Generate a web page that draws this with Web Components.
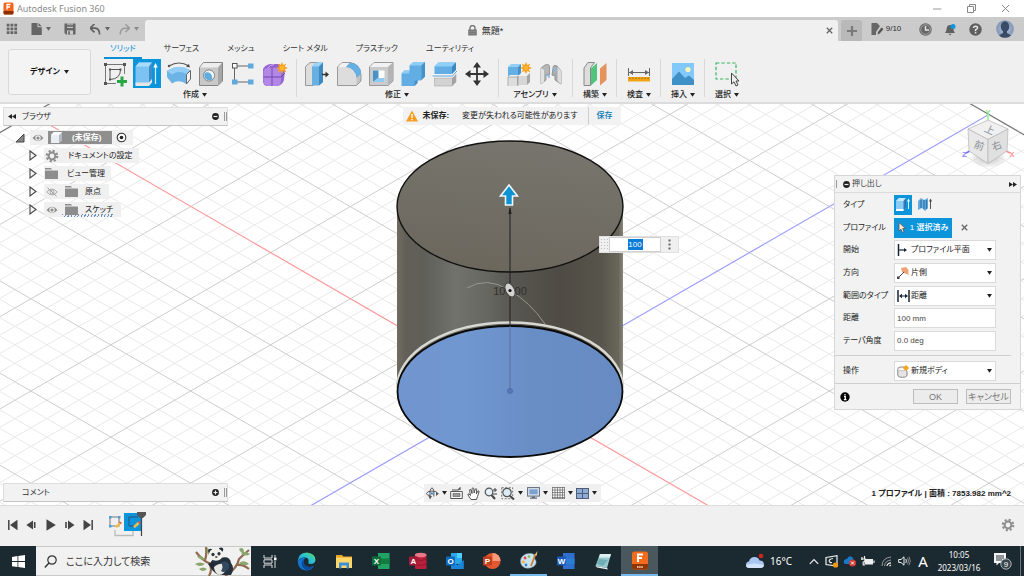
<!DOCTYPE html>
<html lang="ja">
<head>
<meta charset="utf-8">
<title>Autodesk Fusion 360</title>
<style>
  html, body { height: 100%; margin: 0; }
  body {
    background: #fff; color: #2b2b2b;
    font: 8px/12px "Liberation Sans", "Noto Sans CJK JP", sans-serif;
    font-feature-settings: "palt";
    overflow: hidden;
  }
</style>
</head>
<body>
<fusion-app></fusion-app>

<script>
/* ---------- icon library: name -> [width, height, markup] ---------- */
const BOX = (x, y, s, d, front, top, side) =>
  `<path d="M${x} ${y + d}L${x + d} ${y}H${x + s + d}L${x + s} ${y + d}Z" fill="${top}"/>
   <path d="M${x + s} ${y + d}L${x + s + d} ${y}V${y + s}L${x + s} ${y + s + d}Z" fill="${side}"/>
   <path d="M${x} ${y + d}H${x + s}V${y + s + d}H${x}Z" fill="${front}"/>`;
const GEAR = c => `<g fill="none" stroke="${c}"><circle cx="7" cy="7" r="3.4" stroke-width="2"/><circle cx="7" cy="7" r="5.2" stroke-width="2.2" stroke-dasharray="2.1 1.98"/></g>`;
const STAR = (x, y) => `<g transform="translate(${x} ${y})"><path d="M0-6L1.3-2.9L4.2-4.2L2.9-1.3L6 0L2.9 1.3L4.2 4.2L1.3 2.9L0 6L-1.3 2.9L-4.2 4.2L-2.9 1.3L-6 0L-2.9-1.3L-4.2-4.2L-1.3-2.9Z" fill="#f5a01d"/><circle r="2.3" fill="#ffb52e"/></g>`;
const EYE = c => `<path d="M.5 5Q6-1.6 11.500 5Q6 11.600 .5 5Z" fill="${c}"/><circle cx="6" cy="5" r="2.700" fill="#f0f0f0"/><circle cx="6" cy="5" r="1.600" fill="${c}"/>`;
const OFFICE = (back, mid, front, letter) =>
  `<path d="M7 1H18.500V17H7Z" fill="${back}"/><path d="M7 6.500H18.500V12H7Z" fill="${mid}"/><rect x="1" y="4.500" width="9" height="9" rx=".8" fill="${front}"/><text x="5.500" y="11.600" font-family="Liberation Sans" font-size="8" font-weight="700" text-anchor="middle" fill="#fff">${letter}</text>`;

const ICONS = {
  app: [11, 13, `<rect x=".5" y=".5" width="10" height="12" rx="1.500" fill="#f2651d"/><path d="M.5 9H10.500V11A1.500 1.500 0 0 1 9 12.500H2A1.500 1.500 0 0 1 .5 11Z" fill="#8a3206"/><path d="M4 7.500V2.500H7.500M4 5H7" stroke="#fff" stroke-width="1.300" fill="none"/>`],
  minimize: [9, 9, `<path d="M0 5H8.500" stroke="#999" fill="none"/>`],
  restore: [9, 9, `<path d="M.5 2.500H6.500V8.500H.5ZM2.500 2V.5H8.500V6.500H7" stroke="#888" fill="none"/>`],
  closewin: [9, 9, `<path d="M1 1L8 8M8 1L1 8" stroke="#888" fill="none"/>`],
  grid: [12, 12, `<path d="M.7 .7h2.800v2.800H.7zM4.500 .7h2.800v2.800H4.500zM8.300 .7h2.800v2.800H8.300zM.7 4.500h2.800v2.800H.7zM4.500 4.500h2.800v2.800H4.500zM8.300 4.500h2.800v2.800H8.300zM.7 8.300h2.800v2.800H.7zM4.500 8.300h2.800v2.800H4.500zM8.300 8.300h2.800v2.800H8.300z" fill="#666"/>`],
  file: [11, 12, `<path d="M.5 0H6.500V4.300H10.800V12H.5ZM7.500 0L10.800 3.300H7.500Z" fill="#666"/>`],
  caret: [5, 4, `<path d="M0 0H5L2.500 3.800Z" fill="#666"/>`],
  caretd: [5, 4, `<path d="M0 0H5L2.500 3.800Z" fill="#222"/>`],
  caretl: [5, 4, `<path d="M0 0H5L2.500 3.800Z" fill="#8a8a8a"/>`],
  save: [12, 12, `<path d="M.5 .5H11.500V11.500H2L.5 10Z" fill="#666"/><path d="M3 .5H9V5H3ZM3 7.500H9V11.500H3Z" fill="#cbcbcb"/><path d="M3 1.500H9V4H3ZM4 8.300H6V11.500H4Z" fill="#777"/>`],
  undo: [11, 11, `<path d="M4.500 0L0 4.200L4.500 8.400M.8 4.200H5Q9.600 4.600 9.600 10.500" fill="none" stroke="#606060" stroke-width="1.700"/>`],
  redo: [11, 11, `<path d="M6.500 .3L10.600 4.200L6.500 8.100M10 4.200H6Q1.200 4.600 1.200 10.500" fill="none" stroke="#999" stroke-width="1.400"/>`],
  lock: [9, 11, `<path d="M2 5V3A2.500 2.500 0 0 1 7 3V5" fill="none" stroke="#777" stroke-width="1.400"/><rect x=".2" y="4.500" width="8.600" height="6" fill="#777"/><path d="M.5 6.500H8.500M.5 8.500H8.500" stroke="#999" stroke-width=".5"/>`],
  x: [7, 7, `<path d="M.8 .8L6.200 6.200M6.200 .8L.8 6.200" stroke="#666" stroke-width="1.300"/>`],
  plus: [10, 10, `<path d="M5 0V10M0 5H10" stroke="#7a7a7a" stroke-width="2.200"/>`],
  jobs: [13, 12, `<path d="M.5 0H6L9 3L5 9V12H.5Z" fill="#666"/><path d="M6.500 11.500L7 9L10.500 4.500L12.500 6L8.800 10.500Z" fill="#555"/><path d="M7.500 .5L10 3" stroke="#cbcbcb"/>`],
  clock: [13, 13, `<circle cx="6.500" cy="6.500" r="6.200" fill="#666"/><circle cx="6.500" cy="6.500" r="4.800" fill="none" stroke="#bbb" stroke-width=".7"/><path d="M6.500 3V7H10" fill="none" stroke="#e4e4e4" stroke-width="1.500"/>`],
  bell: [13, 13, `<path d="M1 10Q2.600 8.500 2.600 5.500Q3 2 6 2Q9.200 2 9.400 5.500Q9.400 8.500 11 10Z" fill="#606060"/><path d="M4.500 10.800H7.500L6 12.500Z" fill="#606060"/><circle cx="9" cy="3.500" r="2.500" fill="#0b96dd"/>`],
  help: [13, 13, `<circle cx="6.500" cy="6.500" r="6.200" fill="#5f5f5f"/><path d="M4.500 5Q4.500 3.300 6.500 3.300Q8.600 3.300 8.600 5Q8.500 6 6.600 6.800V8.200M6.600 9V10.500" fill="none" stroke="#e4e4e4" stroke-width="1.500"/>`],
  avatar: [18, 18, `<defs><radialGradient id="a"><stop offset="0" stop-color="#b9c8de"/><stop offset="1" stop-color="#7f95b5"/></radialGradient><clipPath id="b"><circle cx="9" cy="9" r="8.800"/></clipPath></defs><circle cx="9" cy="9" r="8.800" fill="url(#a)"/><g clip-path="url(#b)" fill="#3a4b66"><ellipse cx="9" cy="6.500" rx="4.200" ry="5.300"/><path d="M7 10H11V13Q15 14.500 16 18H2Q3 14.500 7 13Z"/></g>`],

  sketch: [26, 26, `<path d="M3.500 3.500H22.500V13M3.500 3.500V22.500H14" fill="none" stroke="#777"/><path d="M8 8.500H18.500Q18.500 18 8 18.500Z" fill="none" stroke="#555"/><g fill="#555"><path d="M2 2h3v3H2zM21 2h3v3h-3zM2 21h3v3H2zM7 7.500h2v2H7zM17.500 7.500h2v2h-2zM7 17.500h2v2H7z"/></g><path d="M20 15.500V25.500M15 20.500H25" stroke="#27a845" stroke-width="3"/>`],
  extrude: [26, 26, `<path d="M1.500 5.500L5 1.500H18V18L15 21.500V24H1.500Z" fill="#7cc2f3"/><path d="M5 1.500H18L15 5.500H1.500Z" fill="#a9dbff"/><path d="M15 5.500L18 1.500V18L15 21.500Z" fill="#3f8cc8"/><path d="M1.500 21.500H15V25H1.500ZM15 21.500L18 18V21.500L15 25Z" fill="#e6e6e6"/><path d="M21.500 23V6" stroke="#d9efff" stroke-width="1.200"/><path d="M19.300 6.500H23.700L21.500 2Z" fill="#fff"/>`],
  revolve: [26, 26, `<path d="M3 5Q13-1 23 5" fill="none" stroke="#555" stroke-width="1.200"/><circle cx="3" cy="5" r="1.200" fill="#555"/><path d="M23.800 6.500L20 5.500L23 3Z" fill="#444"/><path d="M1 10Q13 2 25 10V16L20.500 23Q13 18 6 22.500L1 16Z" fill="#6cb3e6"/><path d="M1 10Q13 2 24 9L20.500 13Q13 9 6 13.500Z" fill="#94cdf5"/><path d="M20.500 13.500L24.500 9.500V18L20.500 23Z" fill="#f5f5f5" stroke="#666"/>`],
  hole: [26, 26, `<path d="M1.500 6.500L5.500 1.500H24.500V20L20 24.500H1.500Z" fill="#c9c9c9" stroke="#858585"/><path d="M5.500 2H24L20 6.500H2Z" fill="#eee"/><path d="M20 6.500L24 2V20L20 24Z" fill="#a6a6a6"/><circle cx="11" cy="14.500" r="5.600" fill="#f4f4f4" stroke="#858585"/><path d="M7.500 11.500Q14 10 14.500 18.500Q10 20.500 6.800 17Q5.500 13.500 7.500 11.500Z" fill="#60abe0"/>`],
  pattern: [26, 26, `<path d="M4.500 5H21M4.500 5V21H21" fill="none" stroke="#666"/><rect x="2.500" y="2.500" width="4.500" height="4.500" fill="#fff" stroke="#555"/><path d="M18 2.500h5.500v5H18zM2 18.500h5.500v5H2zM18 18.500h5.500v5H18z" fill="#5ea9dd"/>`],
  form: [28, 26, `<path d="M2 8Q4 4 9 3H18Q22 5 24 8L23 19Q21 25 15 25H7Q2 25 2 20Z" fill="#9466d2"/><path d="M2.500 10Q3 7 7 7H16Q20 7 20 11V20Q20 25 15 25H7Q2.500 24 2.500 20Z" fill="#b288e6"/><path d="M11 7V25M2.500 16H20L24 12" fill="none" stroke="#7546b4"/><path d="M7 7Q9 3.500 13 3.500" fill="none" stroke="#cfaef5"/>${STAR(21, 7)}`],
  presspull: [26, 26, `<path d="M1.500 5.500L6 1.500H14V21L9 24.500H1.500Z" fill="#ddd" stroke="#999"/><path d="M8 5.500L12 1.500H19V21L15 24.500H8Z" fill="#69afe2"/><path d="M12 1.500H19L15 5.500H8Z" fill="#9bd2f8"/><path d="M15 5.500L19 1.500V21L15 24.500Z" fill="#3f8ac2"/><path d="M18 13.500H22" stroke="#333" stroke-width="1.500"/><path d="M21.500 10.500L25 13.500L21.500 16.500Z" fill="#333"/>`],
  fillet: [26, 26, `<path d="M1.500 6L6 1.500H14Q24.500 3 25 14V20L20.500 24.500H1.500Z" fill="#c4c4c4" stroke="#999"/><path d="M6 2H14L10 6H2Z" fill="#f1f1f1"/><path d="M2 6H10Q19.500 7 20.500 17V24H2Z" fill="#ddd"/><path d="M14 1.500Q25 3 25 13L20.500 17Q19.500 7 10 6Z" fill="#65afe4"/>`],
  shell: [26, 26, `<path d="M1.500 6L6 1.500H25V20L20 24.500H1.500Z" fill="#cbcbcb" stroke="#999"/><path d="M6 2H24.500L20 6H2Z" fill="#f2f2f2"/><path d="M20 6L24.500 2V20L20 24Z" fill="#b4b4b4"/><path d="M5 9.500H16.500V21H5Z" fill="#fff"/><path d="M5 9.500H10.500V17L5 21Z" fill="#4b92c7"/><path d="M5 21L9.500 17H16.500V21Z" fill="#91cbf3"/>`],
  combine: [26, 26, `<path d="M1.500 12.500L4.500 9.500H9.500V4.500L13.500 1H25V15.500L21 19.500H17.500V22L14.500 25H1.500Z" fill="#62aee4"/><path d="M13.500 1H25L21.500 4.500H9.500Z" fill="#8fcdf6"/><path d="M21.500 4.500L25 1V15.500L21.500 19Z" fill="#4691ca"/><path d="M1.500 12.500L4.500 9.500H9.500L9 12.500Z" fill="#8fcdf6"/><path d="M14.500 20L17.500 19V22L14.500 25Z" fill="#4691ca"/>`],
  split: [26, 26, `<path d="M2.500 5.500L6.500 1.500H24V9L20 13H2.500Z" fill="#62aee4"/><path d="M6.500 1.500H24L20 5.500H2.500Z" fill="#90cff8"/><path d="M20 5.500L24 1.500V9L20 13Z" fill="#3d88c0"/><path d="M2.500 17H20L24 13V21L20 25H2.500Z" fill="#d2d2d2" stroke="#aaa" stroke-width=".6"/><path d="M20 17L24 13V21L20 25Z" fill="#a4a4a4"/><path d="M.5 15H20.500L25 10" fill="none" stroke="#fff" stroke-width="2.600"/><path d="M.5 15H20.500L25 10" fill="none" stroke="#4f9bd2"/>`],
  move: [26, 26, `<path d="M13 5V21M5 13H21" stroke="#333" stroke-width="1.800"/><path d="M13 1L17 6.500H9ZM13 25L9 19.500H17ZM1 13L6.500 9V17ZM25 13L19.500 17V9Z" fill="#333"/>`],
  newcomp: [26, 26, `${BOX(2, 3, 10, 3, "#64afe4", "#93cff6", "#4791ca")}${BOX(2, 14, 9, 2, "#ddd", "#eee", "#aaa")}${BOX(12, 12, 9, 3, "#d6d6d6", "#f0f0f0", "#a4a4a4")}<path d="M2 25V16H11.500M12 25V15" fill="none" stroke="#999" stroke-width=".7"/>${STAR(20, 7)}`],
  joint: [26, 26, `<path d="M3 7L7 4Q12 2 11.500 7V14L8 13V19L3 23Z" fill="#b7b7b7" stroke="#888" stroke-width=".8"/><path d="M3 7L6 9V21L3 23Z" fill="#e2e2e2"/><path d="M15 7Q15 3 19 5L23 10V23L17 19V15L14 14Z" fill="#aaa" stroke="#888" stroke-width=".8"/><path d="M19.500 6L23 10V23L19.500 20Z" fill="#ddd"/><path d="M8 14L11 15V17M15 7L17 8V12" fill="none" stroke="#82bee8" stroke-width="1.500"/>`],
  construct: [26, 26, `<path d="M2 7L6 1.500H12.500L8.500 7V24.500H2Z" fill="#ddd" stroke="#888"/><path d="M9 7.500L15 2V19L9 24.500Z" fill="#53c47c"/><path d="M18 7.500L24.500 2V19L18 24.500Z" fill="#e5925c"/>`],
  inspect: [26, 26, `<path d="M2.500 7V15M23.500 7V15" stroke="#666"/><path d="M3 11.500H23" stroke="#666"/><path d="M3 11.500L7 9V14ZM23 11.500L19 9V14Z" fill="#666"/><rect x="2" y="16" width="22" height="4.500" fill="#f3a416"/><path d="M4 16.500V18M7 16.500V18M10 16.500V18M13 16.500V18M16 16.500V18M19 16.500V18M22 16.500V18" stroke="#8a5a00" stroke-width=".8"/>`],
  insert: [26, 26, `<rect x="2" y="2" width="22" height="22" fill="#82c8fb"/><circle cx="18" cy="8.500" r="2.600" fill="#fff3b8"/><path d="M2 18L9 10.500L15 17L19 14.500L24 19V24H2Z" fill="#3e90c6"/>`],
  select: [28, 28, `<rect x="3" y="3" width="20" height="16" fill="none" stroke="#3cb563" stroke-width="1.200" stroke-dasharray="3.400 2"/><path d="M18.500 13V24L21 21.800L23 26L25 25L23 21H26Z" fill="#eee" stroke="#444"/>`],

  rewind2: [8, 5, `<path d="M4 0V5L0 2.500ZM8 0V5L4 2.500Z" fill="#222"/>`],
  forward2: [8, 5, `<path d="M0 0V5L4 2.500ZM4 0V5L8 2.500Z" fill="#222"/>`],
  minusdot: [7, 7, `<circle cx="3.500" cy="3.500" r="3.400" fill="#222"/><path d="M1.500 3.500H5.500" stroke="#eee" stroke-width="1.200"/>`],
  plusdot: [7, 7, `<circle cx="3.500" cy="3.500" r="3.400" fill="#222"/><path d="M1.500 3.500H5.500M3.500 1.500V5.500" stroke="#eee" stroke-width="1.200"/>`],
  info: [10, 10, `<circle cx="5" cy="5" r="4.700" fill="#000"/><path d="M5 2V3.500M4 4.700H5.300V7.500M3.800 7.700H6.500" stroke="#fff" stroke-width="1.300" fill="none"/>`],
  warn: [12, 12, `<path d="M6 .5L12 11.500H0Z" fill="#f79c1e"/><path d="M6 4V8M6 9V10.300" stroke="#fff" stroke-width="1.400"/>`],
  open: [10, 10, `<path d="M9 1V9H1Z" fill="#888" stroke="#444"/>`],
  closed: [8, 11, `<path d="M1 1L7 5.500L1 10Z" fill="#f5f5f5" stroke="#444" stroke-width="1.100"/>`],
  eye: [12, 10, EYE("#8d8d8d")],
  eyeoff: [12, 10, `<path d="M.8 5Q6-.8 11.200 5Q6 10.800 .8 5Z" fill="none" stroke="#aaa"/><circle cx="6" cy="5" r="2" fill="none" stroke="#aaa"/><path d="M1.500 .8L10.500 9.200" stroke="#999"/>`],
  gear: [14, 14, GEAR("#8d8d8d")],
  folder: [13, 11, `<path d="M0 0H6L7 1.500H0ZM0 2.500H13V11H0Z" fill="#8d8d8d"/>`],
  body: [13, 13, `<path d="M1 4L4 1H12V9L9 12H1Z" fill="#e9eef3"/><path d="M9 4L12 1V9L9 12Z" fill="#b4b9bf"/><path d="M4 1H12L9 4H1Z" fill="#fff"/>`],
  radio: [11, 11, `<circle cx="5.500" cy="5.500" r="4.300" fill="#fff" stroke="#333" stroke-width="1.100"/><circle cx="5.500" cy="5.500" r="1.800" fill="#222"/>`],

  typesolid: [14, 14, `<path d="M0 3L3 0H10V10L7.500 13H0Z" fill="#8accf7"/><path d="M3 0H10L7.500 3H0Z" fill="#c3e7ff"/><path d="M7.500 3L10 0V10L7.500 13Z" fill="#3277b0"/><path d="M0 11H7.500V13H0Z" fill="#fff"/><path d="M12.500 11V3" stroke="#d8efff"/><path d="M11 3.500H14L12.500 .5Z" fill="#fff"/>`],
  typethin: [14, 14, `<path d="M0 3L3 0L6 2L10 0V10L7 13L4 10L0 12Z" fill="#64abe0"/><path d="M3 2V10M6 2V11M8.500 2V11" stroke="#3478ae" stroke-width="1.300"/><path d="M12.500 11V3" stroke="#555"/><path d="M11 3.500H14L12.500 .5Z" fill="#444"/>`],
  cursor: [8, 11, `<path d="M1 .5V9L3 7.200L4.500 10.500L6 9.800L4.700 6.500H7.500Z" fill="#ffe8cf" stroke="#4f5963" stroke-width=".8"/>`],
  planar: [12, 12, `<path d="M1.500 0V12" stroke="#17253d" stroke-width="1.500"/><path d="M2 6H8.500" stroke="#17253d" stroke-width="1.200"/><path d="M7 4L10 6L7 8Z" fill="#17253d"/>`],
  oneside: [12, 12, `<path d="M4 1L9 0L11.500 3V8L5 5Z" fill="#f0a276"/><path d="M1 11L7 5" stroke="#444"/><path d="M0 9.500H2.500V12H0Z" fill="#444"/>`],
  dist: [13, 12, `<path d="M1 0V12M12 0V12" stroke="#17253d" stroke-width="1.500"/><path d="M3 6H10" stroke="#17253d"/><path d="M2 6L5 3.800V8.200ZM11 6L8 3.800V8.200Z" fill="#17253d"/>`],
  newbody: [12, 13, `<path d="M.8 4Q.8 2 4 2H7L9 5L10 6V10Q10 12.300 5.500 12.300Q.8 12.300 .8 10Z" fill="#e5e5e5" stroke="#888"/><ellipse cx="5" cy="4.200" rx="4" ry="1.700" fill="#fafafa" stroke="#aaa" stroke-width=".6"/><circle cx="9" cy="3" r="2.300" fill="#f6a51e"/><path d="M9 0V6M6 3H12" stroke="#f6a51e"/>`],

  orbit: [13, 13, `<path d="M4 8.800Q.5 8 .5 6.500Q.8 4.300 6 4Q11 4.200 11.500 6.200" fill="none" stroke="#555"/><path d="M4.200 9.500Q3.300 2 6 .8Q8.500 2 7.800 9.500" fill="none" stroke="#555"/><path d="M2.500 9H6L4 12.500ZM10 5L13 6.500L10 9Z" fill="#555"/><path d="M4.800 6.500H7.200M6 5.300V7.700" stroke="#2488d8" stroke-width="1.200"/>`],
  lookat: [13, 12, `<path d="M.7 4.500H12.300V11.500H.7Z" fill="#fafafa" stroke="#555"/><path d="M3 6.500H10V9.500H3Z" fill="#999" stroke="#555" stroke-width=".6"/><path d="M2 3H8L10 1V3" fill="none" stroke="#555" stroke-width="1.200"/>`],
  hand: [13, 13, `<path d="M4 12.500L1 8Q.5 6.500 2 7L3.500 8.500L2.500 3Q3 1.500 4 3L5 6.500L5 1.500Q6 .2 6.800 1.500L7 6L8.300 2Q9.500 1 9.700 2.500L9.300 7L11 4Q12.500 3.500 12 5L10.500 9.500L9.500 12.500Z" fill="#fff" stroke="#444" stroke-width=".9"/>`],
  zoom: [13, 13, `<circle cx="5" cy="5" r="3.800" fill="#e3f1fa" stroke="#555" stroke-width="1.200"/><path d="M7.500 8L11 12" stroke="#444" stroke-width="2"/><path d="M9 3H13M11 1V5M9 7H13" stroke="#444"/>`],
  zoomwin: [14, 13, `<rect x=".7" y=".7" width="11" height="11" fill="none" stroke="#777" stroke-dasharray="2 1.500"/><circle cx="6" cy="5.500" r="4.200" fill="#dcecf7" stroke="#555" stroke-width="1.200"/><path d="M9 9L13 12.500" stroke="#444" stroke-width="2"/>`],
  display: [13, 12, `<rect x=".6" y=".6" width="11.800" height="8.500" fill="#dfe7f0" stroke="#606a78"/><rect x="2.300" y="2.300" width="8.400" height="5" fill="#7ba1d2"/><path d="M5 9.500H8V10.500H10V11.800H3V10.500H5Z" fill="#606a78"/>`],
  gridnav: [13, 12, `<rect x=".5" y=".5" width="12" height="11" fill="#f8f8f8"/><path d="M.5 0V12M3 0V12M5.500 0V12M8 0V12M10.500 0V12M12.500 0V12M0 .5H13M0 3H13M0 5.500H13M0 8H13M0 10.500H13M0 11.700H13" stroke="#666" stroke-width=".7"/>`],
  viewports: [13, 11, `<rect x=".5" y=".5" width="12" height="10" fill="#8eabd6" stroke="#4e5d78"/><path d="M6.500 .5V10.500M.5 5.500H12.500" stroke="#4e5d78"/>`],

  tostart: [11, 12, `<path d="M1.800 1V11" stroke="#444" stroke-width="1.500"/><path d="M10.500 .8V11.200L3 6Z" fill="#444"/>`],
  stepback: [11, 10, `<path d="M7 .5V9.500L.3 5Z" fill="#444"/><path d="M8.700 2V8" stroke="#444" stroke-width="1.600"/>`],
  play: [10, 12, `<path d="M.5 .3V11.700L9.800 6Z" fill="#444"/>`],
  stepfwd: [11, 10, `<path d="M4 .5V9.500L10.500 5Z" fill="#444"/><path d="M2 2V8" stroke="#444" stroke-width="1.600"/>`],
  toend: [11, 12, `<path d="M9.200 1V11" stroke="#444" stroke-width="1.500"/><path d="M.5 .8V11.200L8 6Z" fill="#444"/>`],
  history: [40, 26, `<path d="M7 18V23.500H25V18" fill="none" stroke="#bbb" stroke-width="1.300"/><rect x="2" y="5" width="9" height="9" fill="none" stroke="#777"/><path d="M1 4h2.500v2.500H1zM10 4h2.500v2.500H10zM1 13h2.500v2.500H1z" fill="#49a2dd"/><path d="M7 14.500L11 10.500L13 12L9 16Z" fill="#f2bd4c"/><path d="M11 10.500L12 9.500L14 11L13 12Z" fill="#e04c3c"/><rect x="16" y="1" width="17" height="18" fill="#0a94dc"/><path d="M21 5H30M21 5V14H26" fill="none" stroke="#2b5575"/><path d="M25 14.500L29.500 10L31.500 12L27 16Z" fill="#f2bd4c"/><path d="M29.500 10L30.500 9L32.500 10.500L31.500 12Z" fill="#e8564a"/><path d="M33.500 5V24" stroke="#444" stroke-width="1.200"/><path d="M29 0H38V3L35 6H32L29 3Z" fill="#555"/>`],

  windows: [13, 13, `<path d="M0 2L5.500 1V6H0ZM6.300 .9L13 0V6H6.300ZM0 7H5.500V12L0 11.200ZM6.300 7H13V13L6.300 12.100Z" fill="#fff"/>`],
  search: [13, 13, `<circle cx="8" cy="5" r="4.200" fill="none" stroke="#333" stroke-width="1.200"/><path d="M5 8L.8 12.500" stroke="#333" stroke-width="1.400"/>`],
  panda: [56, 29, `<path d="M1 5Q8 14 14 16Q22 22 33 26M30 29Q42 22 44 12Q48 8 54 3M11 0Q12 8 10 13M14 16Q18 22 14 29M42 18Q48 17 54 22" fill="none" stroke="#916a50" stroke-width="2.200"/>
    <g fill="#8ba66d"><path d="M2 9Q7 8 10 13Q4 13 2 9ZM0 17Q5 14 10 17Q5 21 0 17ZM46 7Q50 3 55 7Q51 10 46 7ZM44 2Q49-1 49 6Q46 7 44 2ZM44 16Q49 12 54 17Q49 20 44 16ZM4 22Q8 19 12 22Q8 26 4 22ZM12 1Q16 2 14 8Q11 5 12 1Z"/></g>
    <path d="M15 17Q17 10 25 11Q35 8 36 16Q40 21 36 28H24Q15 24 15 17Z" fill="#23303e"/><path d="M19 20Q28 13 31 21Q30 28 24 28Q19 25 19 20Z" fill="#e9e7e2"/>
    <path d="M26 15Q35 13 34 21Q30 27 26 24Q29 20 26 15Z" fill="#34485f"/>
    <circle cx="15.500" cy="4" r="2.300" fill="#222c38"/><circle cx="26" cy="2.800" r="2.300" fill="#222c38"/><ellipse cx="21" cy="7.500" rx="7" ry="6.200" fill="#f3f1ec"/><ellipse cx="18" cy="7.500" rx="1.600" ry="1.800" fill="#2b343f"/><ellipse cx="24" cy="6.800" rx="1.600" ry="1.800" fill="#2b343f"/><ellipse cx="21.300" cy="10" rx="1.300" ry=".8" fill="#222"/>
    <path d="M13 17Q18 14 20 18L17 22Z" fill="#1f2a36"/>`],
  taskview: [14, 13, `<path d="M1 0V3H9V0M1 13V10H9V13M1 4.800H9V8.200H1Z" fill="none" stroke="#ddd"/><path d="M12 0V2M12 6V13" stroke="#ddd"/><rect x="11" y="2.500" width="2.500" height="2.800" fill="#fff"/>`],
  edge: [19, 19, `<defs><linearGradient id="a" x1="0" y1="1" x2="1" y2="0"><stop offset="0" stop-color="#1a8fe0"/><stop offset=".55" stop-color="#2bc3d2"/><stop offset="1" stop-color="#62d95a"/></linearGradient></defs><path d="M.7 9Q1.500 .8 9.500 .5Q18.300 1 18.500 8Q18 12 13.500 12Q10.500 11.800 11.500 10Q12.200 6.500 8.500 5.600Q3.500 5 .7 9Z" fill="url(#a)"/><path d="M.7 9Q4 4.600 8.500 6Q5.500 8.500 7 12Q9.500 16.500 17 14Q14 18.800 9 18.500Q1 17.500 .7 9Z" fill="#1277d2"/><path d="M8.500 6Q5.500 8.500 7 12Q9.500 16.500 17 14Q14 18.300 10 18.400Q4 16 4.500 11Q5.200 7.500 8.500 6Z" fill="#0d4c9d"/>`],
  explorer: [18, 15, `<path d="M1 1H7L8.500 2.500H17V14H1Z" fill="#e9a528"/><path d="M1 3.500H17V14H1Z" fill="#ffd768"/><path d="M4 14.500V8.500H14V14.500H11.500V11.500H6.500V14.500Z" fill="#3a8edb"/>`],
  excel: [19, 18, OFFICE("#21a366", "#107c41", "#0f6f3b", "X")],
  access: [19, 18, `<rect x="7" y="2" width="11.500" height="15" rx="1" fill="#b81f3a"/><ellipse cx="12.700" cy="3" rx="5.800" ry="2.300" fill="#e8798d"/><path d="M7 7Q13 10 18.500 7M7 12Q13 15 18.500 12" stroke="#8e1830" fill="none"/><rect x="1" y="4.500" width="9" height="9" rx=".8" fill="#a51b35"/><text x="5.500" y="11.600" font-family="Liberation Sans" font-size="8" font-weight="700" text-anchor="middle" fill="#fff">A</text>`],
  outlook: [19, 18, `<path d="M6 1H17V12H6Z" fill="#28a8ea"/><path d="M12 1H17V6H12Z" fill="#50d0ff"/><path d="M6 9L12.500 13L18.800 8V17H6Z" fill="#1b85d8"/><rect x="1" y="4.500" width="9" height="9" rx=".8" fill="#0f6cbd"/><text x="5.500" y="11.600" font-family="Liberation Sans" font-size="8" font-weight="700" text-anchor="middle" fill="#fff">O</text>`],
  ppt: [19, 18, `<circle cx="10.500" cy="9" r="8" fill="#e2572f"/><path d="M10.500 1A8 8 0 0 1 18.500 9H10.500Z" fill="#ff9a78"/><rect x="1" y="4.500" width="9" height="9" rx=".8" fill="#c13f1d"/><text x="5.500" y="11.600" font-family="Liberation Sans" font-size="8" font-weight="700" text-anchor="middle" fill="#fff">P</text>`],
  paint: [19, 19, `<path d="M2 13Q0 6 7 3Q16 1 15.500 6Q15 8 17 10Q18 15 11 17Q4 18 2 13Z" fill="#c9e3f0" stroke="#8ba7b8" stroke-width=".6"/><circle cx="6" cy="7" r="1.400" fill="#e2453a"/><circle cx="10" cy="5.500" r="1.300" fill="#7fc043"/><circle cx="4.500" cy="11" r="1.400" fill="#f2b234"/><circle cx="7" cy="14" r="1.400" fill="#3f7fd1"/><path d="M12 15L16.500 3" stroke="#c8833c" stroke-width="1.800"/><path d="M15.500 4L18.500 0L17.700 4.700Z" fill="#f0c26b"/>`],
  word: [19, 18, OFFICE("#2f6fd0", "#2b7cd3", "#1b5abe", "W")],
  notepad: [18, 17, `<path d="M6 1H17L13 15L1.500 13Z" fill="#97cbd0"/><path d="M6 1H17L16 4.500H4.800Z" fill="#dceeed"/><path d="M1.500 13L13 15L14 16.500L3 14.500Z" fill="#f5f5f5"/><path d="M5 6L14 7L9 13L3 11Z" fill="#6eaeb4"/>`],
  fusion: [18, 19, `<rect x="1" y=".5" width="16" height="18" rx="2.500" fill="#f46b1b"/><path d="M1 13H17V16A2.500 2.500 0 0 1 14.500 18.500H3.500A2.500 2.500 0 0 1 1 16Z" fill="#8f3504"/><path d="M7 11V3.500H12M7 7H11" stroke="#fff" stroke-width="2" fill="none"/><path d="M6 16H12" stroke="#ffd9bf" stroke-width="1.500" stroke-dasharray="1.600 .5"/>`],
  weather: [20, 16, `<path d="M4.500 15Q1 15 1 12Q1 9 4 8.600Q5 4 9.500 4Q13.500 4 14.500 7.500Q19 7.500 19 11.500Q19 15 15 15Z" fill="#a8c6f1"/><path d="M4.500 15Q1 15 1 12Q8 9 19 12Q18.500 15 15 15Z" fill="#d3e3fb"/><circle cx="16" cy="3" r="2.300" fill="#d0251f"/>`],
  up: [10, 7, `<path d="M.8 5.800L5 1.500L9.200 5.800" fill="none" stroke="#eee" stroke-width="1.200"/>`],
  screen: [14, 13, `<path d="M1 2.500L12 .7V11L1 9.500Z" fill="none" stroke="#eee" stroke-width="1.200"/><path d="M8 3.500Q4 4 4.200 6Q4.500 8 7 7.500" fill="none" stroke="#eee" stroke-width="1.200"/><circle cx="10.500" cy="10" r="2.600" fill="#f59b0c"/>`],
  onedrive: [14, 12, `<path d="M1 8Q0 4 4 4Q5 .8 8 1.500Q10 2 10.500 4.500L7 9H3Q1.500 9 1 8Z" fill="#1879ca"/><circle cx="9.500" cy="8" r="3.500" fill="#d23a30"/><path d="M8 6.500L11 9.500M11 6.500L8 9.500" stroke="#fff"/>`],
  battery: [14, 10, `<rect x="3.500" y="3" width="8.500" height="5.500" fill="#eee"/><path d="M13 4.500V7M1 1V4M3.500 0V3M0 3H4.500Q4.500 6 2.200 6V9H4" fill="none" stroke="#eee" stroke-width="1.200"/>`],
  wifi: [11, 11, `<g fill="none" stroke="#999"><path d="M1 10Q1 2 10 1"/><path d="M3.500 10Q4 4.500 10 4"/></g><path d="M6 10Q6.500 7 10 6.800M8.500 10L10 9" fill="none" stroke="#eee" stroke-width="1.200"/>`],
  volume: [13, 10, `<path d="M.7 3.500H3L6 .8V9.200L3 6.500H.7Z" fill="none" stroke="#eee"/><path d="M7.800 3Q9 5 7.800 7" fill="none" stroke="#eee"/><path d="M9.500 1.700Q11.500 5 9.500 8.300M11 .7Q13.500 5 11 9.300" fill="none" stroke="#888"/>`],
  notify: [20, 18, `<path d="M1 1H13V11H6L3.500 13.500V11H1Z" fill="#f4f4f4"/><path d="M3 4H11M3 6H11M3 8H9" stroke="#2b383e"/><circle cx="13" cy="12" r="5.200" fill="#39464c" stroke="#aab1b4"/><text x="13" y="15" font-family="Liberation Sans" font-size="8" text-anchor="middle" fill="#fff">9</text>`]
};

class FxIcon extends HTMLElement {
  connectedCallback() {
    if (this.shadowRoot) return;
    const [w, h, art] = ICONS[this.getAttribute("name")];
    this.attachShadow({ mode: "open" }).innerHTML =
      `<style>:host{display:block;flex:none}svg{display:block}</style>
       <svg width="${w}" height="${h}" viewBox="0 0 ${w} ${h}" aria-hidden="true">${art}</svg>`;
  }
}
customElements.define("fx-icon", FxIcon);

const BASE = `<style>
  *{box-sizing:border-box}
  button,input,select{font:inherit;font-feature-settings:inherit;color:inherit;margin:0;padding:0;border:0;background:none;border-radius:0;outline:0}
  button{display:flex;align-items:center;justify-content:center;white-space:nowrap}
  ul{list-style:none;margin:0;padding:0}
</style>`;
class FxElement extends HTMLElement {
  connectedCallback() {
    if (this.shadowRoot) return;
    this.attachShadow({ mode: "open" }).innerHTML = BASE + this.render();
  }
}
const ic = n => `<fx-icon name="${n}"></fx-icon>`;

class FusionTitlebar extends FxElement {
  render() { return `<style>
    :host{display:flex;align-items:center;height:17px;padding:0 14px 0 3px;background:#fff;color:#8a8a8a;font:9px/12px "Noto Sans",sans-serif}
    span{flex:1;margin-left:3px}
    nav{display:flex;gap:24px}
    button{width:10px;height:12px}
    </style>${ic("app")}<span>Autodesk Fusion 360</span>
    <nav><button aria-label="最小化">${ic("minimize")}</button><button aria-label="元に戻す">${ic("restore")}</button><button aria-label="閉じる">${ic("closewin")}</button></nav>`; }
}
customElements.define("fusion-titlebar", FusionTitlebar);

class FusionAppbar extends FxElement {
  render() { return `<style>
    :host{display:flex;height:24px;padding-top:3px;background:#cbcbcb;align-items:stretch}
    .quick{display:flex;align-items:center;width:145px;padding-left:6px;padding-bottom:3px}
    .quick button{gap:4px;height:16px}
    .quick .file{margin-left:13px}.quick .save{margin-left:13px}.quick .undo{margin-left:14px}.quick .redo{margin-left:9px}
    .doc{flex:1;display:flex;align-items:center;background:#f0f0f0;border-radius:3px 3px 0 0;padding-right:5px}
    .name{flex:1;display:flex;align-items:center;justify-content:center;gap:5px;font-size:9px}
    .new{width:21px;margin:0 0 0 3px;background:#b9b9b9;border-radius:3px 3px 0 0}
    .status{display:flex;align-items:center;padding:0 10px 3px 8px}
    .status button{gap:2px}
    .jobs{width:32px;margin-right:11px}.status .g{width:25px}.status .av{width:18px;margin-left:8px}
    </style>
    <div class="quick"><button aria-label="データ パネル">${ic("grid")}</button><button class="file" aria-label="ファイル">${ic("file")}${ic("caret")}</button><button class="save" aria-label="保存">${ic("save")}</button><button class="undo" aria-label="元に戻す">${ic("undo")}${ic("caret")}</button><button class="redo" aria-label="やり直し">${ic("redo")}${ic("caretl")}</button></div>
    <div class="doc"><div class="name">${ic("lock")}<span>無題*</span></div><button aria-label="閉じる">${ic("x")}</button></div>
    <button class="new" aria-label="新規">${ic("plus")}</button>
    <div class="status"><button class="jobs">${ic("jobs")}<span>9/10</span></button><button class="g" aria-label="ジョブ">${ic("clock")}</button><button class="g" aria-label="通知">${ic("bell")}</button><button class="g" aria-label="ヘルプ">${ic("help")}</button><button class="av" aria-label="アカウント">${ic("avatar")}</button></div>`; }
}
customElements.define("fusion-appbar", FusionAppbar);

class ToolGroup extends FxElement {
  render() {
    const tools = this.getAttribute("tools").split(" ");
    const on = this.getAttribute("active");
    return `<style>
      :host{display:flex;flex-direction:column;align-items:center;height:38px;padding:0 5px 0 ${tools.length > 1 ? 4 : 6}px;border-right:1px solid #d9d9d9;flex:none}
      :host([last]){border-color:transparent}
      .tools{display:flex}
      .tools button{width:32px;height:29px}
      .tools .on{width:28px;margin:0 2px;background:#0d95dc}
      .menu{gap:3px;height:12px;margin-top:1px;color:#222;font-weight:500}
      </style>
      <div class="tools">${tools.map(t => `<button class="${t === on ? "on" : ""}" aria-label="${t}">${ic(t)}</button>`).join("")}</div>
      <button class="menu"><slot></slot>${ic("caretd")}</button>`;
  }
}
customElements.define("tool-group", ToolGroup);

class FusionRibbon extends FxElement {
  render() { return `<style>
    :host{display:flex;height:63px;background:#f0f0f0;border-bottom:2px solid #dcdcdc;padding-left:8px}
    .space{width:83px;height:46px;margin-top:8px;border:1px solid #d9d9d9;border-radius:3px;background:#f4f4f4;gap:4px;color:#111;font-weight:700}
    .body{flex:1;padding-left:4px}
    .tabs{display:flex;gap:28px;height:18px;padding-left:15px}
    .tabs button{height:18px;color:#333;border-bottom:2px solid transparent;padding:2px 6px 3px;margin:0 -6px}
    .tabs .on{color:#0b8fd6;border-color:#0b8fd6}
    .groups{display:flex}
    </style>
    <button class="space">デザイン ${ic("caretd")}</button>
    <div class="body">
      <div class="tabs" role="tablist"><button class="on" role="tab">ソリッド</button><button role="tab">サーフェス</button><button role="tab">メッシュ</button><button role="tab">シート メタル</button><button role="tab">プラスチック</button><button role="tab">ユーティリティ</button></div>
      <div class="groups">
        <tool-group tools="sketch extrude revolve hole pattern form" active="extrude">作成</tool-group>
        <tool-group tools="presspull fillet shell combine split move">修正</tool-group>
        <tool-group tools="newcomp joint">アセンブリ</tool-group>
        <tool-group tools="construct">構築</tool-group>
        <tool-group tools="inspect">検査</tool-group>
        <tool-group tools="insert">挿入</tool-group>
        <tool-group tools="select" last>選択</tool-group>
      </div>
    </div>`; }
}
customElements.define("fusion-ribbon", FusionRibbon);

/* The modelling scene: isometric grid, axes and the extruded cylinder. */
class FusionScene extends FxElement {
  render() {
    const S = Math.tan(Math.PI / 6), step = 18.44, ox = 510, oy = 391, a = 30 * step;
    const X = v => ox + v / (2 * S);
    let minor = "", major = "";
    for (let k = -29; k <= 30; k++) {
      const c = k * step;
      /* each family stops where it meets the outer border of the other one */
      const seg = `M${X(-a - c).toFixed(1)} ${(oy + (c - a) / 2).toFixed(1)}L${X(a - c).toFixed(1)} ${(oy + (c + a) / 2).toFixed(1)}` +
                  `M${X(c + a).toFixed(1)} ${(oy + (c - a) / 2).toFixed(1)}L${X(c - a).toFixed(1)} ${(oy + (c + a) / 2).toFixed(1)}`;
      if (k % 5) minor += seg; else if (k) major += seg;
    }
    return `<style>:host{display:block;overflow:hidden}svg{display:block;width:100%;height:100%}</style>
    <svg viewBox="0 104 1024 401" preserveAspectRatio="xMidYMid slice" role="img" aria-label="モデル">
      <defs>
        <linearGradient id="side"><stop offset="0" stop-color="#716c62"/><stop offset=".04" stop-color="#625f57"/><stop offset=".12" stop-color="#5f5f59"/><stop offset=".26" stop-color="#70726b"/><stop offset=".4" stop-color="#666761"/><stop offset=".52" stop-color="#575650"/><stop offset=".72" stop-color="#4f4b44"/><stop offset=".9" stop-color="#57544b"/><stop offset=".98" stop-color="#69665c"/><stop offset="1" stop-color="#88857a"/></linearGradient>
        <linearGradient id="cap" x1=".6" y1="0" x2=".4" y2="1"><stop offset="0" stop-color="#77756d"/><stop offset="1" stop-color="#6c675d"/></linearGradient>
        <linearGradient id="base"><stop offset="0" stop-color="#7095cf"/><stop offset=".3" stop-color="#7197d0"/><stop offset=".6" stop-color="#698ec6"/><stop offset="1" stop-color="#678bc2"/></linearGradient>
      </defs>
      <g fill="none"><path d="${minor}" stroke="#e9e9e9"/><path d="${major}" stroke="#cdcdcd"/>
        <path d="M510 -162L1124 192.500M510 -162L-104 192.500" stroke="#777" stroke-width="1.200"/>
        <path d="M31 114L766 539" stroke="#ff9a9a" stroke-width="1.200"/><path d="M988 115L253 539" stroke="#9d9dff" stroke-width="1.200"/></g>
      <path d="M397 206V391A113 65.500 0 0 0 623 391V206Z" fill="url(#side)"/>
      <ellipse cx="510" cy="206.500" rx="113" ry="65.500" fill="url(#cap)" stroke="#111" stroke-width="1.400"/>
      <path d="M397 388A113 65.500 0 0 1 623 388" fill="none" stroke="#d8d8d2" stroke-width="2.500"/>
      <ellipse cx="510" cy="391.500" rx="112.500" ry="65.500" fill="url(#base)" stroke="#0a0a0a" stroke-width="1.800"/>
      <path d="M467 288Q487 276 509 290Q530 302 545 324" fill="none" stroke="#96968f"/>
      <path d="M510 208V326" stroke="#1f1f1d"/><path d="M510 326V391" stroke="#5472a8"/><path d="M508.300 214L510 207L511.700 214Z" fill="#222"/>
      <circle cx="510" cy="391" r="2.500" fill="#5678b4" stroke="#4c6eaa"/>
      <text x="510" y="295" font-family="Liberation Sans" font-size="11" text-anchor="middle" fill="#33322f">100.00</text>
      <ellipse cx="510" cy="290" rx="4.300" ry="7.500" transform="rotate(-26 510 290)" fill="#d4d4d0" stroke="#444"/><circle cx="510" cy="290.500" r="1.600" fill="#111"/>
      <path d="M509 185L517.500 196H512.500V205H505.500V196H500.500Z" fill="#0d93d4" stroke="#eef8ff" stroke-width="1.600"/>
    </svg>`;
  }
}
customElements.define("fusion-scene", FusionScene);

class PanelBar extends FxElement {
  render() { return `<style>
    :host{display:flex;align-items:center;width:225px;height:19px;background:#f2f2f2;border:1px solid #dedede;border-bottom-color:#c4c4c4;padding:0 0 0 4px;flex:none}
    .lead{width:8px;margin-right:6px}
    span{flex:1}
    i{width:3px;height:9px;border:1px solid #999;border-width:0 1px;margin-left:5px}
    </style><div class="lead">${this.hasAttribute("lead") ? ic("rewind2") : ""}</div><span><slot></slot></span><button aria-label="切替">${ic(this.getAttribute("dot"))}</button><i></i>`; }
}
customElements.define("panel-bar", PanelBar);

class BrowserTree extends FxElement {
  render() { return `<style>
    :host{display:block;padding-top:4px}
    ul{display:flex;flex-direction:column;gap:3px}
    li{display:flex;align-items:center;height:15px;padding-left:26px}
    li.root{padding-left:12px}
    .tw{width:15px}
    .row{display:flex;align-items:center;height:15px;background:#f0f0f0;color:#222}
    .row.a{padding:0 6px 0 1px;gap:9px}
    .row.b{padding:0 8px 0 2px;gap:7px}
    .root .row{padding:0 6px 0 2px;gap:4px}
    .sel{display:flex;align-items:center;gap:9px;height:13px;width:64px;padding-left:2px;background:#8f8f8f;color:#fff;font-weight:700}
    .row.under{background:repeating-linear-gradient(115deg,#6f8fb8 0 1px,transparent 1px 3px) 18px 100%/52px 3px no-repeat #f0f0f0}
    </style><ul role="tree">
    <li class="root" role="treeitem"><div class="tw">${ic("open")}</div><div class="row">${ic("eye")}<div class="sel">${ic("body")}<span>(未保存)</span></div>${ic("radio")}</div></li>
    <li role="treeitem"><div class="tw">${ic("closed")}</div><div class="row a">${ic("gear")}<span>ドキュメントの設定</span></div></li>
    <li role="treeitem"><div class="tw">${ic("closed")}</div><div class="row a">${ic("folder")}<span>ビュー管理</span></div></li>
    <li role="treeitem"><div class="tw">${ic("closed")}</div><div class="row b">${ic("eyeoff")}${ic("folder")}<span>原点</span></div></li>
    <li role="treeitem"><div class="tw">${ic("closed")}</div><div class="row b under">${ic("eye")}${ic("folder")}<span>スケッチ</span></div></li>
    </ul>`; }
}
customElements.define("browser-tree", BrowserTree);

class UnsavedNotice extends FxElement {
  render() { return `<style>
    :host{display:flex;align-items:center;height:18px;background:#f2f2f2;color:#222;padding-left:3px;white-space:nowrap}
    b{margin:0 13px 0 4px}
    a{display:flex;align-items:center;height:18px;color:#0a78b4;text-decoration:none;font-weight:500;border-left:1px solid #cfcfcf;margin-left:10px;padding:0 8px}
    </style>${ic("warn")}<b>未保存:</b><span>変更が失われる可能性があります</span><a href="#save">保存</a>`; }
}
customElements.define("unsaved-notice", UnsavedNotice);

class NavToolbar extends FxElement {
  render() {
    const items = [["orbit", 1], ["lookat"], ["hand"], ["zoom"], ["zoomwin", 1], ["display", 1], ["gridnav", 1], ["viewports", 1]];
    return `<style>
      :host{display:flex;align-items:center;justify-content:space-between;width:177px;height:18px;background:#f0f0f0;padding:0 3px 0 2px}
      button{gap:3px;height:18px}
      </style>${items.map(([n, m]) => `<button aria-label="${n}">${ic(n)}${m ? ic("caretd") : ""}</button>`).join("")}`;
  }
}
customElements.define("nav-toolbar", NavToolbar);

class ViewCube extends FxElement {
  render() { return `<style>:host{display:block}svg{display:block}</style>
    <svg width="60" height="68" viewBox="961 107 60 68" role="img" aria-label="ビュー キューブ" font-family="Noto Sans CJK JP" text-anchor="middle">
      <defs><radialGradient id="sh"><stop offset="0" stop-color="#bbb"/><stop offset="1" stop-color="#bbb" stop-opacity="0"/></radialGradient></defs>
      <ellipse cx="988" cy="158" rx="19" ry="10" fill="url(#sh)"/>
      <path d="M988 114V121" stroke="#8f8" stroke-width="1.500"/><path d="M966 153L972 150" stroke="#66f" stroke-width="1.500"/><path d="M1004 150L1010 153" stroke="#f88" stroke-width="1.500"/>
      <path d="M988 120L1008 129L988 139.500L968 129Z" fill="#f0f0f0" stroke="#bbb" stroke-width=".8"/>
      <path d="M968 129L988 139.500V163.500L969 151Z" fill="#e8e8e8" stroke="#bbb" stroke-width=".8"/>
      <path d="M1008 129L988 139.500V163.500L1007 151Z" fill="#e0e0e0" stroke="#bbb" stroke-width=".8"/>
      <g fill="#8a8f96" font-size="10"><text transform="translate(988 133) rotate(25)">上</text><text transform="translate(978 149) rotate(20)">前</text><text transform="translate(998 149) rotate(-20)">右</text></g>
      <g font-family="Liberation Sans" font-size="8" font-weight="700"><text x="964.500" y="157" fill="#88f">Z</text><text x="1012" y="157" fill="#f99">X</text><text x="988" y="115" fill="#8e8">Y</text></g>
    </svg>`; }
}
customElements.define("view-cube", ViewCube);

class DialogRow extends FxElement {
  render() { return `<style>
    :host{display:grid;grid-template-columns:51px 102px;align-items:center;color:#222}
    label{white-space:nowrap}
    .ctl{display:flex;align-items:center}
    </style><label><slot name="label"></slot></label><div class="ctl"><slot></slot></div>`; }
}
customElements.define("dialog-row", DialogRow);

class FxSelect extends FxElement {
  render() { return `<style>
    :host{display:grid;width:100%;height:20px;align-items:center;background:#fff;border:1px solid #dadada;color:#222}
    select,fx-icon{grid-area:1/1}
    .l{justify-self:start;margin-left:2px;pointer-events:none}.r{justify-self:end;margin-right:3px;pointer-events:none}
    select{appearance:none;width:100%;height:18px;padding-left:16px}
    </style><select aria-label="${this.getAttribute("label")}"><option>${this.getAttribute("value")}</option></select><fx-icon class="l" name="${this.getAttribute("icon")}"></fx-icon><fx-icon class="r" name="caretd"></fx-icon>`; }
}
customElements.define("fx-select", FxSelect);

class FxInput extends FxElement {
  render() { return `<style>
    :host{display:block;width:100%}
    input{display:block;width:100%;height:20px;background:#fff;border:1px solid #dadada;padding-left:2px;color:#444}
    </style><input type="text" aria-label="${this.getAttribute("label")}" value="${this.getAttribute("value")}">`; }
}
customElements.define("fx-input", FxInput);

class ExtrudeDialog extends FxElement {
  render() { return `<style>
    :host{display:block;width:187px;background:#f2f2f2;border:1px solid #d6d6d6}
    header{display:flex;align-items:center;height:17px;padding:0 3px 0 1px;border-bottom:1px solid #dcdcdc;color:#444;font-size:8px}
    header i{width:2px;height:8px;border-left:1px solid #999;margin-right:5px}
    header span{flex:1;margin-left:2px}
    .rows{display:grid;grid-auto-rows:1fr;height:159px;padding:1px 0 0 8px}
    .op{padding:2px 0 2px 8px;margin:3px 9px 0 0;}
    hr{border:0;border-top:1px solid #cfcfcf;margin:3px 9px 0 0}
    .type{width:18px;height:20px;margin-right:4px}
    .type.on,.pick{background:#0d95dc}
    .pick{width:58px;height:20px;gap:4px;color:#fff;font-weight:500}
    .clear{margin-left:9px}
    footer{display:flex;align-items:center;height:26px;border-top:1px solid #cfcfcf;padding:0 9px 0 5px;gap:8px;font-size:9px;color:#777}
    footer span{flex:1}
    footer button{width:45px;height:15px;background:#ececec;border:1px solid #bdbdbd}
    </style>
    <header><i></i>${ic("minusdot")}<span>押し出し</span>${ic("forward2")}</header>
    <div class="rows">
      <dialog-row><span slot="label">タイプ</span><button class="type on" aria-label="押し出し">${ic("typesolid")}</button><button class="type" aria-label="薄い押し出し">${ic("typethin")}</button></dialog-row>
      <dialog-row><span slot="label">プロファイル</span><button class="pick">${ic("cursor")}1 選択済み</button><button class="clear" aria-label="クリア">${ic("x")}</button></dialog-row>
      <dialog-row><span slot="label">開始</span><fx-select label="開始" icon="planar" value="プロファイル平面"></fx-select></dialog-row>
      <dialog-row><span slot="label">方向</span><fx-select label="方向" icon="oneside" value="片側"></fx-select></dialog-row>
      <dialog-row><span slot="label">範囲のタイプ</span><fx-select label="範囲のタイプ" icon="dist" value="距離"></fx-select></dialog-row>
      <dialog-row><span slot="label">距離</span><fx-input label="距離" value="100 mm"></fx-input></dialog-row>
      <dialog-row><span slot="label">テーパ角度</span><fx-input label="テーパ角度" value="0.0 deg"></fx-input></dialog-row>
    </div>
    <hr>
    <dialog-row class="op"><span slot="label">操作</span><fx-select label="操作" icon="newbody" value="新規ボディ"></fx-select></dialog-row>
    <footer>${ic("info")}<span></span><button>OK</button><button>キャンセル</button></footer>`; }
}
customElements.define("extrude-dialog", ExtrudeDialog);

class DistanceBox extends FxElement {
  render() { return `<style>
    :host{display:flex;align-items:center;width:80px;height:17px;background:#f0f0f0;border:1px solid #e0e0e0}
    .grip{width:9px;height:13px;background:radial-gradient(#bbb 1px,transparent 1px) 0 0/3px 3px}
    input{width:52px;height:15px;border:1px solid #d0d0d0;text-align:center;color:#fff;font-size:8px;
      background:linear-gradient(#0a7bd6,#0a7bd6) center/15px 11px no-repeat,#fff}
    .more{flex:1;height:15px;color:#555}
    svg{display:block}
    </style><div class="grip"></div><input type="text" aria-label="距離" value="100"><button class="more" aria-label="その他"><svg width="3" height="11" viewBox="0 0 3 11"><path d="M.5 .5h2v2h-2zM.5 4.500h2v2h-2zM.5 8.500h2v2h-2z" fill="#666"/></svg></button>`; }
}
customElements.define("distance-box", DistanceBox);

class FusionViewport extends FxElement {
  render() { return `<style>
    :host{display:grid;grid-template:minmax(0,1fr)/minmax(0,1fr);min-height:0;background:#fff}
    fusion-scene,.over{grid-area:1/1}
    .over{display:grid;grid-template-columns:1fr auto 1fr;padding:3px;position:relative}
    .col{display:flex;flex-direction:column;justify-content:space-between}
    .mid{align-items:center}.right{align-items:flex-end}
    .stack{display:flex;flex-direction:column;align-items:flex-end}
    .stat{font-size:8px;font-weight:700;padding:0 10px 2px 0;color:#222;white-space:nowrap}
    distance-box{position:absolute;left:calc(50% + 87px);top:132px}
    </style>
    <fusion-scene></fusion-scene>
    <div class="over">
      <div class="col"><div><panel-bar lead dot="minusdot">ブラウザ</panel-bar><browser-tree></browser-tree></div><panel-bar dot="plusdot">コメント</panel-bar></div>
      <div class="col mid"><unsaved-notice></unsaved-notice><nav-toolbar></nav-toolbar></div>
      <div class="col right"><div class="stack"><view-cube></view-cube><extrude-dialog></extrude-dialog></div><div class="stat">1 プロファイル | 面積 : 7853.982 mm^2</div></div>
      <distance-box></distance-box>
    </div>`; }
}
customElements.define("fusion-viewport", FusionViewport);

class FusionTimeline extends FxElement {
  render() { return `<style>
    :host{display:flex;align-items:center;height:41px;background:#f0f0f0;border-top:1px solid #ddd;padding:0 9px 3px 7px}
    button{width:11px;height:16px;margin-right:8px}
    .play{display:flex;margin-right:6px}
    .hist{flex:1}
    .set{width:14px;margin:0}
    </style><div class="play">${["tostart", "stepback", "play", "stepfwd", "toend"].map(n => `<button aria-label="${n}">${ic(n)}</button>`).join("")}</div><div class="hist">${ic("history")}</div><button class="set" aria-label="設定">${ic("gear")}</button>`; }
}
customElements.define("fusion-timeline", FusionTimeline);

class WinTaskbar extends FxElement {
  render() {
    const apps = ["taskview", "edge", "explorer", "excel", "access", "outlook", "ppt", "paint", "word", "notepad", "fusion"];
    return `<style>
    :host{display:flex;align-items:stretch;height:30px;background:#1b2a30;color:#fff;font-family:"Noto Sans","Noto Sans CJK JP",sans-serif}
    .start{width:36px}
    .search{display:flex;align-items:center;width:215px;background:#f1f1f1;border:1px solid #c9c9c9;border-width:1px 0;padding-left:8px;color:#333}
    .search input{flex:1;min-width:0;margin-left:9px;font-size:10px;font-family:"Noto Sans CJK JP",sans-serif}
    .search input::placeholder{color:#333;opacity:1}
    .app{width:37px}
    .open{border-bottom:2px solid #76b9ed}
    .on{background:#4a585e}
    .gap{flex:1}
    .weather{gap:5px;font-size:10px;margin-right:13px}
    .tray{width:18px}
    .ime{width:20px;font:15px/20px "Noto Sans",sans-serif}
    .clock{width:52px;flex-direction:column;line-height:13px}
    .note{width:35px}
    .peek{width:4px;border-left:1px solid #68747a}
    </style>
    <button class="start" aria-label="スタート">${ic("windows")}</button>
    <label class="search">${ic("search")}<input type="search" placeholder="ここに入力して検索" aria-label="検索">${ic("panda")}</label>
    ${apps.map(a => `<button class="app ${a === "fusion" ? "open on" : a === "paint" ? "open" : ""}" aria-label="${a}">${ic(a)}</button>`).join("")}
    <div class="gap"></div>
    <button class="weather">${ic("weather")}16°C</button>
    ${["up", "screen", "onedrive", "battery", "wifi", "volume"].map(a => `<button class="tray" aria-label="${a}">${ic(a)}</button>`).join("")}
    <button class="ime">A</button>
    <button class="clock"><span>10:05</span><span>2023/03/16</span></button>
    <button class="note" aria-label="通知">${ic("notify")}</button><div class="peek"></div>`;
  }
}
customElements.define("win-taskbar", WinTaskbar);

class FusionApp extends FxElement {
  render() { return `<style>
    :host{display:flex;flex-direction:column;height:100vh}
    fusion-viewport{flex:1}
    fusion-titlebar,fusion-appbar,fusion-ribbon,fusion-timeline,win-taskbar{flex:none}
    </style><fusion-titlebar></fusion-titlebar><fusion-appbar></fusion-appbar><fusion-ribbon></fusion-ribbon><fusion-viewport></fusion-viewport><fusion-timeline></fusion-timeline><win-taskbar></win-taskbar>`; }
}
customElements.define("fusion-app", FusionApp);
</script>
</body>
</html>
